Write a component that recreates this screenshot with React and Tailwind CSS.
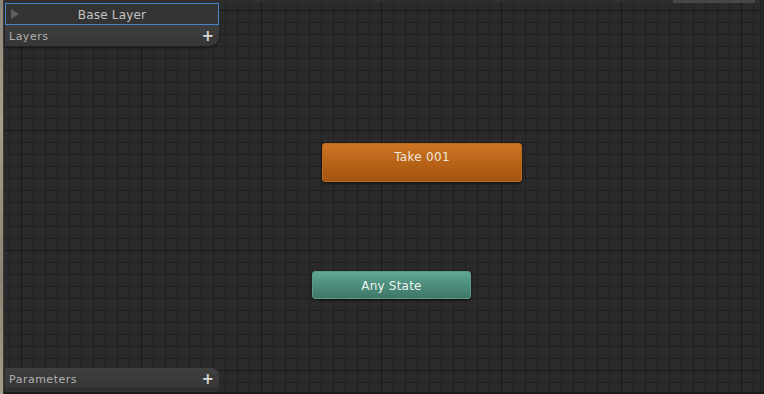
export default function App() {
  return (
    <div className="w-[764px] h-[394px] flex bg-[#2a2a2a] overflow-hidden [font-family:'DejaVu_Sans',sans-serif]">
      <div className="w-[3px] h-full bg-[linear-gradient(to_bottom,#8d8677,#a49e8c_30%,#8a8474_70%,#a29c8a)]" />
      <div className="w-px h-full bg-[#3a3a3a]" />
      <div className="relative flex-1 h-full bg-[#2a2a2a] [background-image:linear-gradient(to_right,#191919_1px,transparent_1px),linear-gradient(to_bottom,#191919_1px,transparent_1px),linear-gradient(to_right,#202020_1px,transparent_1px),linear-gradient(to_bottom,#202020_1px,transparent_1px)] [background-size:120px_120px,120px_120px,12px_12px,12px_12px] [background-position:17px_10px,17px_10px,5px_10px,5px_10px]">
        {/* top bar */}
        <div className="absolute left-0 right-0 top-0 h-[3px] flex bg-[#2e2e2e]">
          <div className="w-[669px]" />
          <div className="w-[82px] bg-[#474747]" />
          <div className="flex-1 bg-[#2e2e2e]" />
        </div>
        {/* right edge */}
        <div className="absolute right-0 top-0 bottom-0 w-[4px] bg-[#262626] border-l border-[#1e1e1e]" />
        {/* bottom edge */}
        <div className="absolute left-0 right-0 bottom-0 h-[2px] bg-[#1a1a1a]" />

        {/* Base Layer */}
        <div className="absolute left-[1px] top-[3px] w-[214px] flex flex-col">
          <div className="h-[22px] flex items-center border border-[#4a7fcc] bg-[#343434] relative">
            <svg width="8" height="10" viewBox="0 0 8 10" className="absolute left-[5px] top-[5px]">
              <path d="M0 0 L8 5 L0 10 Z" fill="#5e5e5e" />
            </svg>
            <span className="w-full text-center text-[12px] text-[#c4c4c4] tracking-[0.2px] leading-none pt-[1px]">Base Layer</span>
          </div>
          <div className="h-[22px] flex items-center justify-between pl-[4px] pr-[5px] pt-[2px] rounded-br-[10px] bg-[linear-gradient(to_bottom,#3e3e3e,#363636)] border-b border-[#222] shadow-[0_1px_2px_rgba(0,0,0,0.5)]">
            <span className="text-[11px] text-[#b0b0b0] tracking-[0.5px] leading-none">Layers</span>
            <span className="text-[15px] font-bold text-[#d8d8d8] leading-none">+</span>
          </div>
        </div>

        {/* Take 001 */}
        <div className="absolute left-[318px] top-[143px] w-[200px] h-[39px] rounded-[3px] bg-[linear-gradient(to_bottom,#cd7424,#b86418_50%,#a2540f)] shadow-[0_1px_3px_rgba(0,0,0,0.7)] border border-[#c06a1e] flex justify-center pt-[6px]">
          <span className="text-[12px] text-[#f0e6dc] tracking-[0.3px] leading-[14px]">Take 001</span>
        </div>

        {/* Any State */}
        <div className="absolute left-[308px] top-[271px] w-[159px] h-[28px] rounded-[3px] bg-[linear-gradient(to_bottom,#5fa893,#4c8d7c_50%,#3f7667)] shadow-[0_1px_3px_rgba(0,0,0,0.7)] border border-[#5a9a89] flex items-center justify-center">
          <span className="text-[12px] text-[#eaf2ee] tracking-[0.2px] leading-none pt-[1px]">Any State</span>
        </div>

        {/* Parameters */}
        <div className="absolute left-[1px] top-[368px] w-[214px] h-[24px] flex flex-col">
          <div className="flex-1 flex items-center justify-between pl-[4px] pr-[5px] pt-[2px] rounded-tr-[8px] bg-[linear-gradient(to_bottom,#3f3f3f,#363636)] border-b border-[#2a2a2a]">
            <span className="text-[11px] text-[#b0b0b0] tracking-[0.5px] leading-none">Parameters</span>
            <span className="text-[15px] font-bold text-[#d8d8d8] leading-none">+</span>
          </div>
          <div className="h-[3px] bg-[#303030]" />
        </div>
      </div>
    </div>
  );
}
